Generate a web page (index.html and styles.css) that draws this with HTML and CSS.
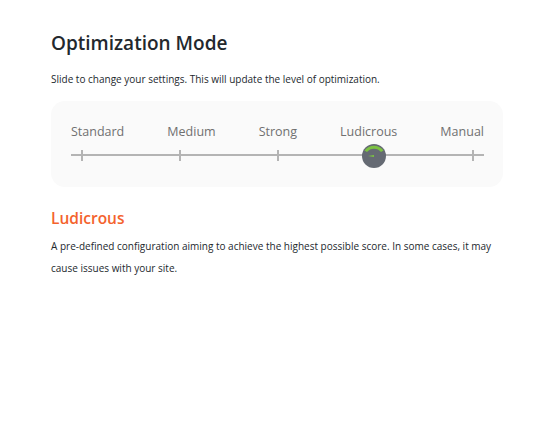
FILE: index.html
```html
<!DOCTYPE html>
<html lang="en">
<head>
    <meta charset="UTF-8">
    <meta name="viewport" content="width=device-width, initial-scale=1.0">
    <title>Optimization Mode</title>
    <link rel="stylesheet" href="styles.css">
</head>
<body>
    <div class="panel">
        <h1>Optimization Mode</h1>
        <p class="intro">Slide to change your settings. This will update the level of optimization.</p>

        <div class="slider-card">
            <div class="labels">
                <span>Standard</span>
                <span>Medium</span>
                <span>Strong</span>
                <span>Ludicrous</span>
                <span>Manual</span>
            </div>
            <div class="track">
                <span class="tick"></span>
                <span class="tick"></span>
                <span class="tick"></span>
                <span class="tick active">
                    <span class="handle">
                        <svg width="24" height="24" viewBox="0 0 24 24">
                            <circle cx="12" cy="12" r="12" fill="#656a73"/>
                            <path d="M2.5 6.5 A12 12 0 0 1 21.5 6.5 L19 8 A9 9 0 0 0 5 8 Z" fill="#7cc243"/>
                            <path d="M6 12 L12 11 L12 13 Z" fill="#7cc243"/>
                        </svg>
                    </span>
                </span>
                <span class="tick"></span>
            </div>
        </div>

        <h2>Ludicrous</h2>
        <p class="desc">A pre-defined configuration aiming to achieve the highest possible score. In some cases, it may cause issues with your site.</p>
    </div>
</body>
</html>
```

FILE: styles.css
```css
body {
    font-family: 'Open Sans', sans-serif;
    background-color: #ffffff;
    margin: 0;
    color: #23282d;
}

.panel {
    padding: 28px 47px 20px 51px;
}

h1 {
    font-size: 19px;
    font-weight: 600;
    margin: 0;
    line-height: 30px;
    color: #23282d;
}

.intro {
    font-size: 10px;
    margin: 13px 0 0;
    line-height: 16px;
}

.slider-card {
    background-color: #fafafa;
    border-radius: 14px;
    margin-top: 14px;
    padding: 22px 19px 26px 20px;
}

.labels {
    display: flex;
    justify-content: space-between;
    font-size: 12.5px;
    color: #707070;
    line-height: 18px;
}

.track {
    position: relative;
    display: flex;
    justify-content: space-between;
    align-items: center;
    height: 12px;
    margin-top: 8px;
    padding: 0 10px;
}

.track::before {
    content: "";
    position: absolute;
    left: 0;
    right: 0;
    top: 5px;
    height: 2px;
    background-color: #b4b4b4;
}

.tick {
    position: relative;
    width: 2px;
    height: 11px;
    background-color: #b4b4b4;
}

.tick.active {
    background-color: transparent;
}

.handle {
    position: absolute;
    left: -12px;
    top: -6px;
    width: 24px;
    height: 24px;
}

.handle svg {
    display: block;
}

h2 {
    font-size: 15.5px;
    font-weight: 600;
    color: #f4622d;
    margin: 19px 0 0;
    line-height: 24px;
}

.desc {
    font-size: 10px;
    line-height: 22px;
    margin: 5px 0 0;
}
```
